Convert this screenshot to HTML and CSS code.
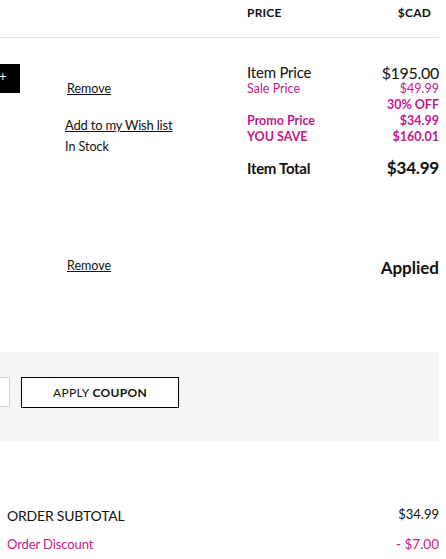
FILE: index.html
```html
<!DOCTYPE html>
<html>
<head>
<meta charset="utf-8">
<link rel="stylesheet" href="styles.css">
</head>
<body>
<div class="page">
  <div class="head">
    <div class="head-left"></div>
    <div class="head-right">
      <span>PRICE</span><span>$CAD</span>
    </div>
  </div>

  <div class="item">
    <div class="item-left">
      <div class="qty">+</div>
      <div class="details">
        <a class="remove">Remove</a>
        <a class="wish">Add to my Wish list</a>
        <div class="stock">In Stock</div>
      </div>
    </div>
    <div class="item-right">
      <div class="row big"><span>Item Price</span><span class="amt-big">$195.00</span></div>
      <div class="row pink"><span>Sale Price</span><span>$49.99</span></div>
      <div class="row pink bold"><span></span><span>30% OFF</span></div>
      <div class="row pink bold"><span>Promo Price</span><span>$34.99</span></div>
      <div class="row pink bold"><span>YOU SAVE</span><span>$160.01</span></div>
      <div class="row total"><span>Item Total</span><span class="amt-total">$34.99</span></div>
    </div>
  </div>

  <div class="coupon-row">
    <div class="coupon-left"><a class="remove">Remove</a></div>
    <div class="applied">Applied</div>
  </div>

  <div class="coupon-band">
    <div class="coupon-input"></div>
    <button class="coupon-btn">APPLY <b>COUPON</b></button>
  </div>

  <div class="summary">
    <div class="sum-row"><span class="sum-label">ORDER SUBTOTAL</span><span class="sum-amt">$34.99</span></div>
    <div class="sum-row pink"><span class="sum-label">Order Discount</span><span class="sum-amt">- $7.00</span></div>
  </div>
</div>
</body>
</html>
```

FILE: styles.css
```css
html, body {
  margin: 0;
  padding: 0;
  background: #fff;
}
body {
  font-family: Lato, "Noto Sans", sans-serif;
  color: #111;
  width: 446px;
  height: 559px;
  overflow: hidden;
}
.page {
  width: 439px;
}
.head {
  display: flex;
  height: 37px;
  border-bottom: 1px solid #dedede;
}
.head-left {
  width: 247px;
}
.head-right {
  flex: 1;
  display: flex;
  justify-content: space-between;
  padding: 6px 8px 0 0;
  font-size: 12px;
  font-weight: 700;
  line-height: 14px;
  letter-spacing: 0.2px;
}
.item {
  display: flex;
  height: 188px;
}
.item-left {
  width: 247px;
  display: flex;
  align-items: flex-start;
}
.qty {
  width: 20px;
  height: 29px;
  margin-top: 26px;
  background: #000;
  color: #fff;
  font-size: 13px;
  line-height: 24px;
  text-indent: -1px;
  box-sizing: border-box;
}
.details {
  margin-left: 45px;
  padding-top: 43px;
  display: flex;
  flex-direction: column;
  align-items: flex-start;
}
.remove {
  font-size: 12.5px;
  line-height: 16px;
  text-decoration: underline;
  margin-left: 2px;
  color: #111;
}
.wish {
  margin-top: 20px;
  font-size: 13px;
  line-height: 16px;
  letter-spacing: -0.2px;
  text-decoration: underline;
  color: #111;
}
.stock {
  margin-top: 6px;
  font-size: 12.5px;
  line-height: 16px;
}
.item-right {
  flex: 1;
  padding-top: 26px;
}
.row {
  display: flex;
  justify-content: space-between;
  font-size: 12.5px;
  line-height: 16px;
}
.row.big {
  font-size: 15px;
  line-height: 17px;
  letter-spacing: -0.2px;
}
.amt-big {
  font-size: 16px;
  letter-spacing: -0.3px;
}
.pink {
  color: #c8168a;
}
.bold {
  font-weight: 700;
}
.row.total {
  margin-top: 13px;
  font-size: 15px;
  line-height: 20px;
  font-weight: 700;
  letter-spacing: -0.3px;
}
.amt-total {
  font-size: 17px;
  letter-spacing: -0.2px;
}
.coupon-row {
  display: flex;
  align-items: flex-start;
  height: 126px;
}
.coupon-left {
  width: 247px;
  padding-left: 65px;
  padding-top: 28px;
  box-sizing: border-box;
}
.applied {
  flex: 1;
  text-align: right;
  padding-top: 32px;
  font-size: 17px;
  font-weight: 700;
  line-height: 20px;
}
.coupon-band {
  background: #f5f5f5;
  height: 89px;
  display: flex;
  align-items: flex-start;
  padding-top: 25px;
  box-sizing: border-box;
}
.coupon-input {
  width: 10px;
  height: 30px;
  background: #fff;
  border: 1px solid #cfcfcf;
  border-left: none;
  box-sizing: border-box;
}
.coupon-btn {
  margin-left: 11px;
  width: 158px;
  height: 31px;
  background: #fff;
  border: 1px solid #000;
  font-family: Lato, "Noto Sans", sans-serif;
  font-size: 12px;
  letter-spacing: 0.3px;
  color: #111;
  padding: 0;
}
.coupon-btn b {
  font-weight: 700;
}
.summary {
  padding: 61px 0 0 7px;
}
.sum-row {
  display: flex;
  justify-content: space-between;
  align-items: center;
  height: 27px;
}
.sum-row + .sum-row {
  margin-top: 1px;
}
.sum-label {
  font-size: 14px;
  letter-spacing: -0.2px;
}
.sum-amt {
  font-size: 13px;
  margin-top: -3px;
}
.sum-row.pink .sum-label {
  font-size: 13px;
  letter-spacing: -0.1px;
}
.sum-row.pink .sum-amt {
  font-size: 13.5px;
  margin-top: 0;
}
```
